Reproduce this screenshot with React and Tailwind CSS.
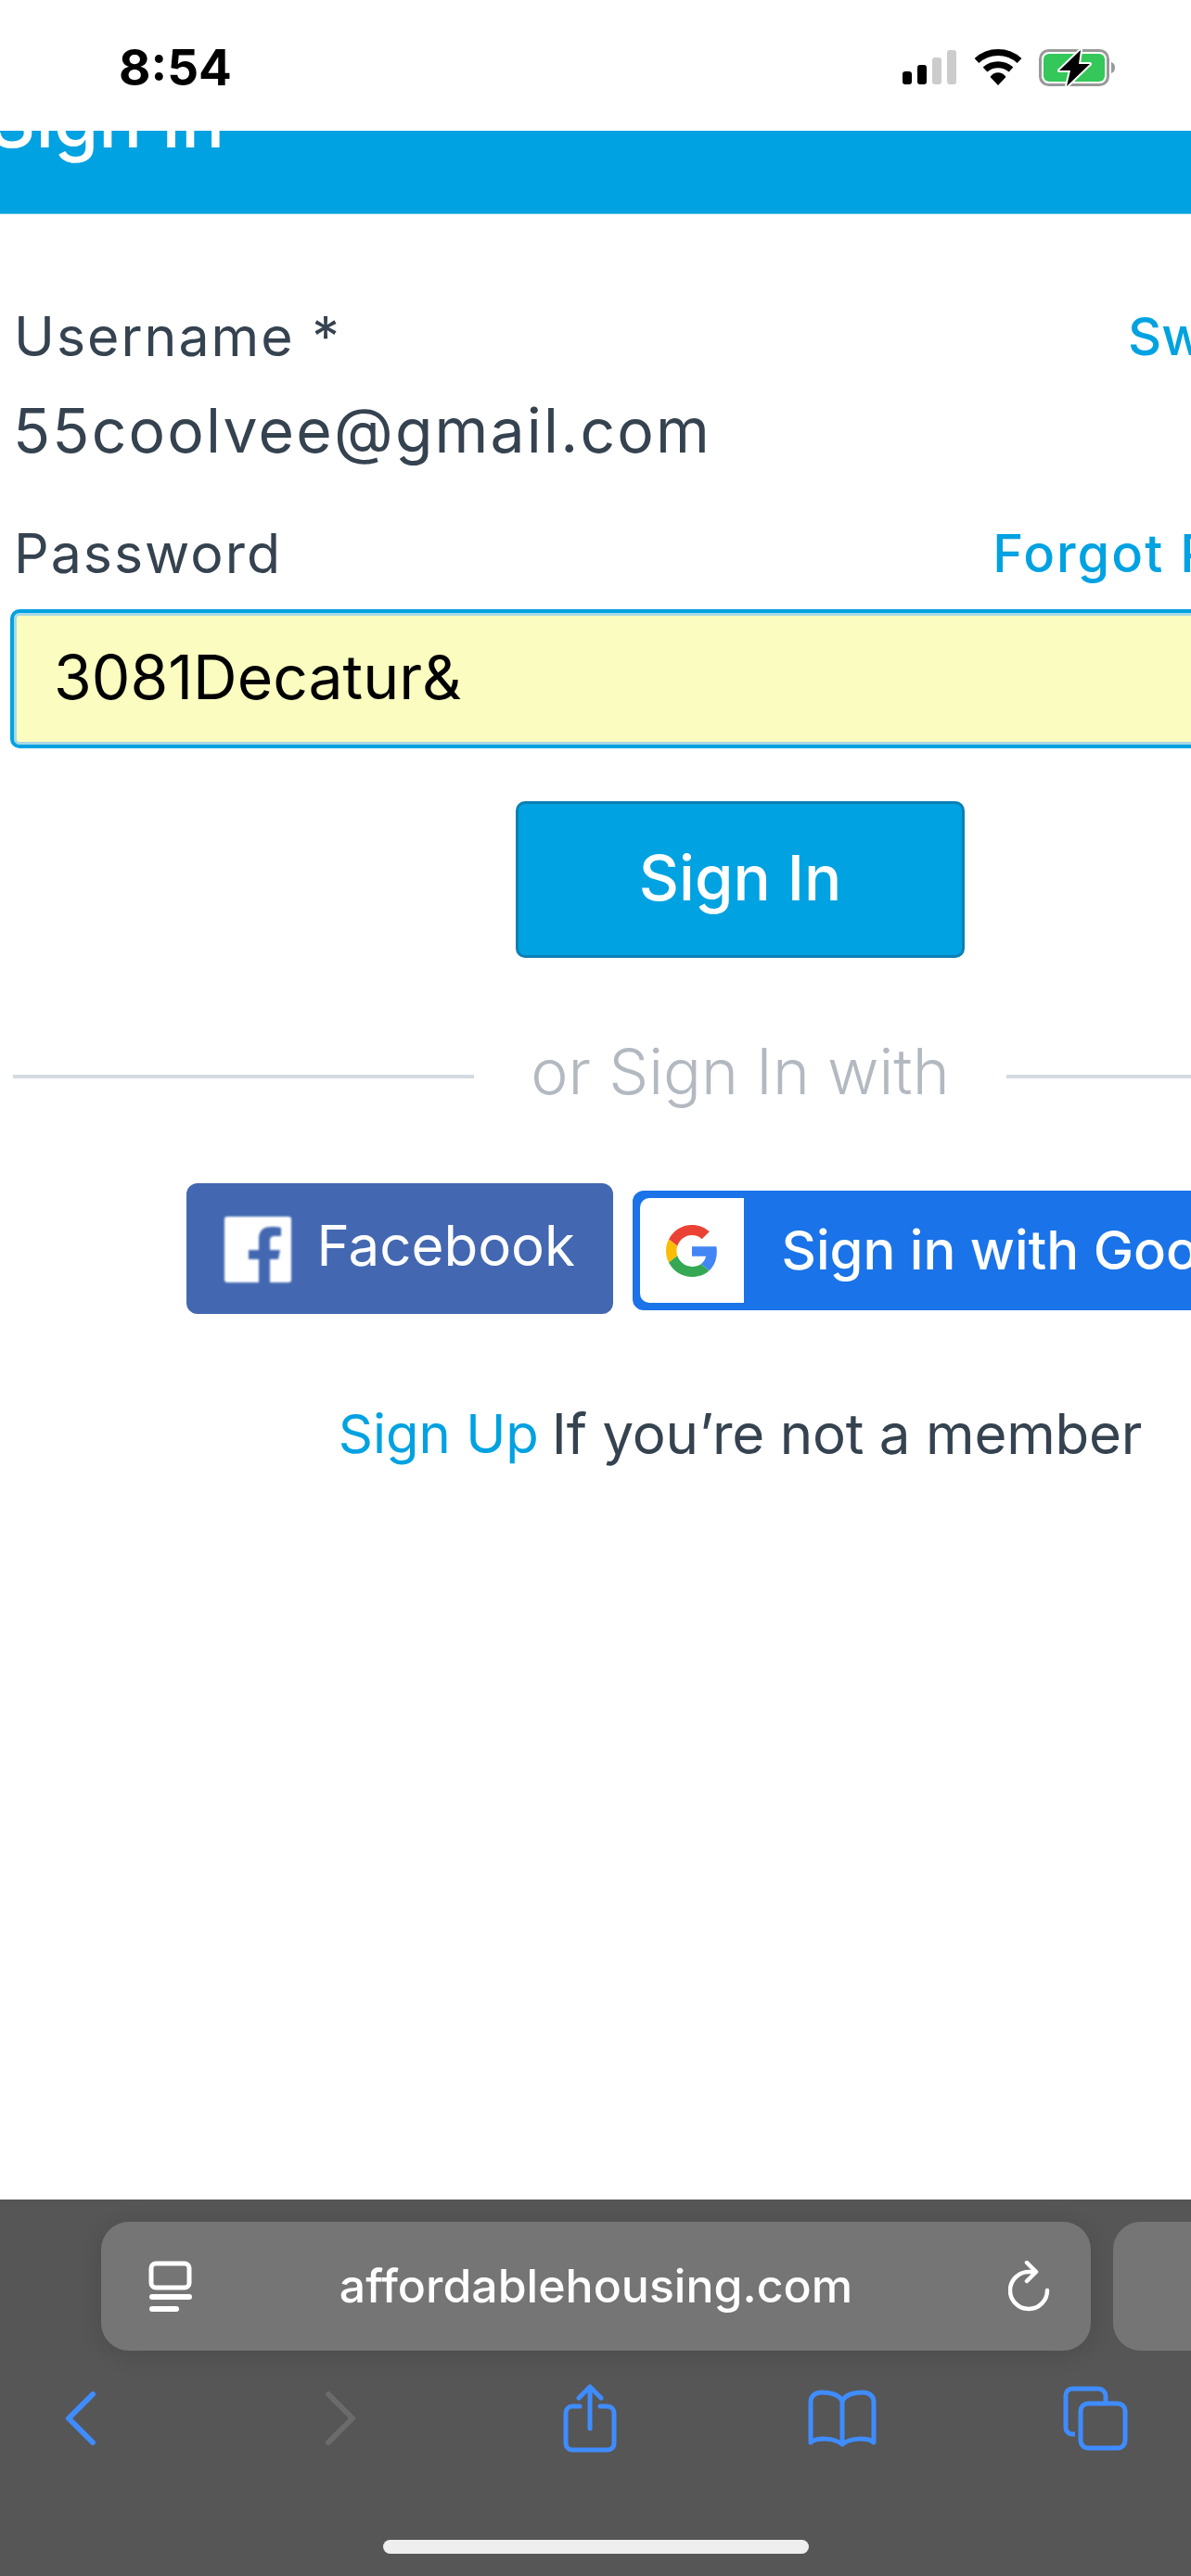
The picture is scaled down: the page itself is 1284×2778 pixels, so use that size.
import React from 'react';

const StatusIcons = () => (
  <svg width="232" height="44" viewBox="0 0 232 44" className="block">
    {/* signal */}
    <rect x="1" y="25" width="10" height="14" rx="3" fill="#000" />
    <rect x="17" y="18" width="10" height="21" rx="3" fill="#000" />
    <rect x="33" y="10" width="10" height="29" rx="3" fill="#ccc" />
    <rect x="49" y="2" width="10" height="37" rx="3" fill="#ccc" />
    {/* wifi */}
    <path d="M81 13.5a34 34 0 0 1 46 0" fill="none" stroke="#000" strokeWidth="7" />
    <path d="M90 23a21 21 0 0 1 28 0" fill="none" stroke="#000" strokeWidth="7" />
    <path d="M95.5 31a10 10 0 0 1 17 0L104 40z" fill="#000" />
    {/* battery */}
    <rect x="149.5" y="2.5" width="73" height="37" rx="9" fill="none" stroke="#999" strokeWidth="3" />
    <rect x="153" y="6" width="66" height="30" rx="6" fill="#34c759" />
    <path d="M226 15c3 1 4 3 4 6s-1 5-4 6z" fill="#999" />
    <path d="M193 2L170 24h12l-4 17 25-24h-12z" fill="#000" stroke="#fff" strokeWidth="4" paintOrder="stroke" strokeLinejoin="round" />
  </svg>
);

const FacebookIcon = () => (
  <svg width="72" height="71" viewBox="0 0 72 71" className="block blur-[1px]">
    <rect width="72" height="71" rx="3" fill="#fff" />
    <path d="M37 71V46H26V36h11v-12c0-9 5-13 13-13 4 0 9 0 11 1v9h-6c-4 0-6 1-6 5v10h11l-2 10h-9v25z" fill="#4368b1" />
  </svg>
);

const GoogleIcon = () => (
  <svg width="56" height="58" viewBox="0 0 48 48" className="block">
    <path fill="#EA4335" d="M24 9.5c3.54 0 6.71 1.22 9.21 3.6l6.85-6.85C35.9 2.38 30.47 0 24 0 14.62 0 6.51 5.38 2.56 13.22l7.98 6.19C12.43 13.72 17.74 9.5 24 9.5z" />
    <path fill="#4285F4" d="M46.98 24.55c0-1.57-.15-3.09-.38-4.55H24v9.02h12.94c-.58 2.96-2.26 5.48-4.78 7.18l7.73 6c4.51-4.18 7.09-10.36 7.09-17.65z" />
    <path fill="#FBBC05" d="M10.53 28.59c-.5-1.45-.78-2.99-.78-4.59s.27-3.14.78-4.59l-7.98-6.19C.92 16.46 0 20.12 0 24c0 3.88.92 7.54 2.56 10.78l7.97-6.19z" />
    <path fill="#34A853" d="M24 48c6.48 0 11.93-2.13 15.89-5.81l-7.73-6c-2.15 1.45-4.92 2.3-8.16 2.3-6.26 0-11.57-4.22-13.47-9.91l-7.98 6.19C6.51 42.62 14.62 48 24 48z" />
  </svg>
);

const ReaderIcon = () => (
  <svg width="48" height="56" viewBox="0 0 48 56" className="block" fill="none">
    <rect x="3" y="3" width="41" height="26" rx="5" stroke="#fff" strokeWidth="5" />
    <rect x="1" y="36" width="46" height="6" rx="3" fill="#fff" />
    <rect x="1" y="49" width="32" height="6" rx="3" fill="#fff" />
  </svg>
);

const ReloadIcon = () => (
  <svg width="46" height="56" viewBox="0 0 46 56" className="block" fill="none" stroke="#fff" strokeWidth="4.5" strokeLinecap="round" strokeLinejoin="round">
    <path d="M42 32a20 20 0 1 1-20-20h6" />
    <path d="M20 2l10 10-10 10" />
  </svg>
);

const Chevron = ({ flip, color }) => (
  <svg width="34" height="58" viewBox="0 0 34 58" className="block" fill="none" stroke={color} strokeWidth="6" strokeLinecap="round" strokeLinejoin="round">
    <path d={flip ? 'M4 3l26 26L4 55' : 'M30 3L4 29l26 26'} />
  </svg>
);

const ShareIcon = () => (
  <svg width="58" height="74" viewBox="0 0 58 74" className="block" fill="none" stroke="#3f8cff" strokeWidth="5" strokeLinecap="round" strokeLinejoin="round">
    <path d="M18 24H10a7 7 0 0 0-7 7v33a7 7 0 0 0 7 7h38a7 7 0 0 0 7-7V31a7 7 0 0 0-7-7h-8" />
    <path d="M29 48V4" />
    <path d="M17 15L29 3l12 12" />
  </svg>
);

const BookIcon = () => (
  <svg width="74" height="62" viewBox="0 0 74 62" className="block" fill="none" stroke="#3f8cff" strokeWidth="5" strokeLinecap="round" strokeLinejoin="round">
    <path d="M37 12C33 5 25 3 15 3 8 3 3 7 3 13v44c6-5 24-6 34 2 10-8 28-7 34-2V13c0-6-5-10-12-10-10 0-18 2-22 9z" />
    <path d="M37 12v46" />
  </svg>
);

const TabsIcon = () => (
  <svg width="70" height="70" viewBox="0 0 70 70" className="block" fill="none" stroke="#3f8cff" strokeWidth="5" strokeLinejoin="round">
    <path d="M13 52H10a7 7 0 0 1-7-7V10a7 7 0 0 1 7-7h28a8 8 0 0 1 8 8v7" />
    <rect x="19" y="19" width="48" height="48" rx="8" />
  </svg>
);

const App = () => {
  return (
    <div className="flex h-[2778px] w-[1284px] flex-col overflow-hidden bg-white font-['Inter',sans-serif]">
      {/* Status bar */}
      <div className="flex h-[141px] flex-none items-start justify-between pl-[128px] pr-[80px] pt-[50px]">
        <span className="text-[53px] font-bold leading-[46px] text-black">8:54</span>
        <div className="pt-[2px]">
          <StatusIcons />
        </div>
      </div>

      {/* Page header, scrolled under the status bar */}
      <div className="h-[90px] flex-none overflow-hidden border-b border-[#5cc3ec] bg-[#00a2e1]">
        <h1 className="-ml-[12px] -mt-[50px] text-[78px] font-medium leading-[80px] text-white">Sign In</h1>
      </div>

      {/* Form, wider than the viewport */}
      <div className="min-h-0 flex-1 overflow-hidden">
        <div className="flex w-[1596px] flex-col px-[14px]">
          <div className="mt-[92px] flex h-[80px] items-center justify-between text-[#35424f]">
            <span className="ml-[1px] text-[59px] font-normal tracking-[2px]">Username *</span>
            <span className="w-[366px] text-[56px] font-medium text-[#00a2e1]">Switch</span>
          </div>
          <div className="mt-[21px] flex h-[80px] items-center text-[66px] font-normal tracking-[2.2px] text-[#35424f]">
            55coolvee@gmail.com
          </div>
          <div className="mt-[53px] flex h-[80px] items-center justify-between">
            <span className="ml-[1px] text-[59px] font-normal tracking-[2px] text-[#35424f]">Password</span>
            <span className="text-[56px] font-medium tracking-[2px] text-[#00a2e1]">Forgot Password?</span>
          </div>
          <div className="-ml-[3px] mt-[20px] flex h-[150px] items-center rounded-[10px] border-[4px] border-[#00a2e1] bg-[#fafdbf] pb-[4px] pl-[43px] text-[66px] font-normal text-black shadow-[inset_0_0_0_3px_#a9d8e6]">
            3081Decatur&amp;
          </div>
          <button className="mt-[57px] h-[169px] w-[484px] self-center rounded-[10px] border-[3px] border-[#0c80b5] bg-[#00a2e1] pb-[2px] text-[67px] font-medium text-white">
            Sign In
          </button>
          <div className="mt-[88px] flex h-[80px] items-center">
            <div className="h-[4px] flex-1 bg-[#d4dae1]" />
            <span className="mx-[61px] pb-[12px] text-[68px] font-light text-[#b3b9c1]">or Sign In with</span>
            <div className="h-[4px] flex-1 bg-[#d4dae1]" />
          </div>
          <div className="mt-[75px] flex items-start justify-center gap-[21px]">
            <div className="flex h-[141px] w-[460px] items-start rounded-[12px] bg-[#4368b1] pl-[41px] pt-[36px]">
              <FacebookIcon />
              <span className="ml-[28px] text-[60px] font-normal leading-[62px] text-white">Facebook</span>
            </div>
            <div className="mt-[8px] flex h-[129px] w-[714px] items-center rounded-[12px] border-[8px] border-[#1a73e8] bg-[#1a73e8]">
              <div className="flex h-[113px] w-[112px] items-center justify-center rounded-l-[10px] bg-white">
                <GoogleIcon />
              </div>
              <span className="ml-[41px] whitespace-nowrap text-[58px] font-medium text-white">Sign in with Google</span>
            </div>
          </div>
          <div className="mt-[89px] flex h-[80px] items-center justify-center text-[60px] font-normal text-[#35424f]">
            <span className="text-[58px] text-[#00a2e1]">Sign Up</span>
            <span className="ml-[14px] tracking-[-0.2px]">If you’re not a member</span>
          </div>
        </div>
      </div>

      {/* Safari toolbar */}
      <div className="flex h-[406px] flex-none flex-col overflow-hidden bg-[#565656]">
        <div className="mt-[24px] flex gap-[24px] pl-[109px]">
          <div className="flex h-[139px] w-[1067px] flex-none items-center justify-between rounded-[30px] bg-[#757575] pl-[51px] pr-[43px] shadow-[0_4px_24px_rgba(0,0,0,0.12)]">
            <ReaderIcon />
            <span className="mr-[10px] text-[50px] font-medium text-white">affordablehousing.com</span>
            <ReloadIcon />
          </div>
          <div className="h-[139px] w-[200px] flex-none rounded-[30px] bg-[#757575]" />
        </div>
        <div className="mt-[36px] flex h-[74px] items-center pl-[70px]">
          <Chevron color="#3f8cff" />
          <div className="ml-[246px]">
            <Chevron flip color="#6b6b6b" />
          </div>
          <div className="ml-[223px]">
            <ShareIcon />
          </div>
          <div className="ml-[206px]">
            <BookIcon />
          </div>
          <div className="ml-[201px]">
            <TabsIcon />
          </div>
        </div>
        <div className="ml-[413px] mt-[94px] h-[15px] w-[459px] rounded-full bg-[#eeeeee]" />
      </div>
    </div>
  );
};

export default App;
